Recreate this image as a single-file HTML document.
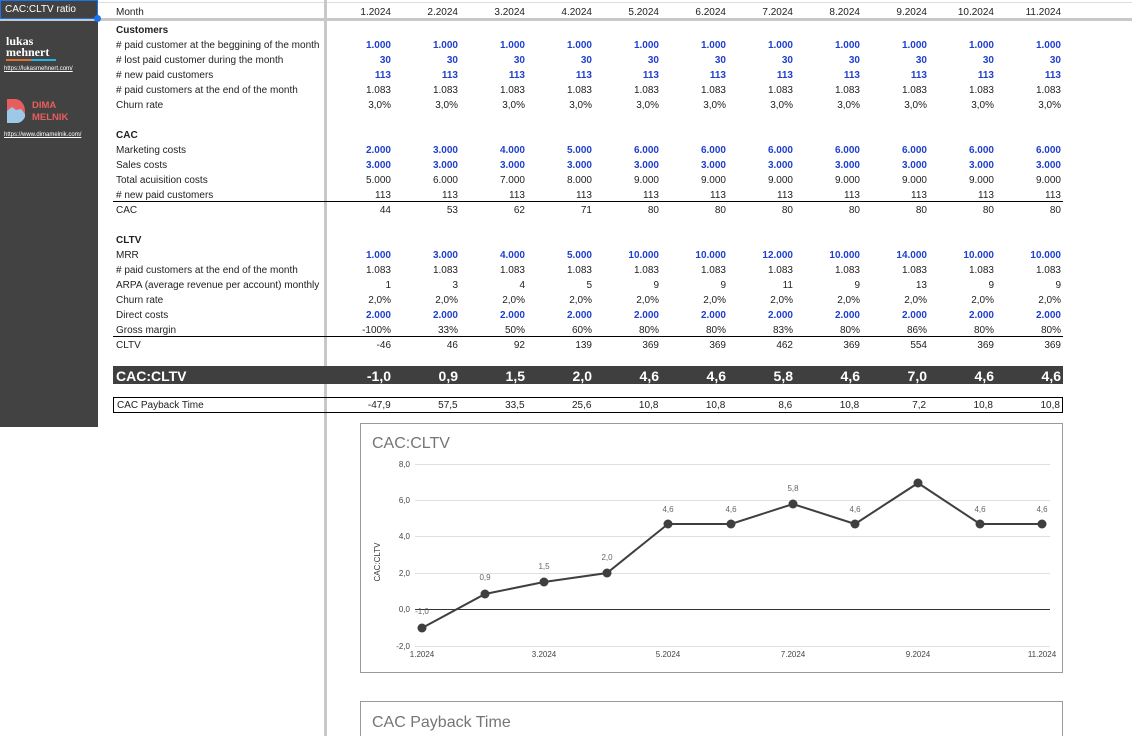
<!DOCTYPE html>
<html><head><meta charset="utf-8"><style>
*{margin:0;padding:0;box-sizing:border-box}
body{width:1132px;height:736px;background:#fff;position:relative;overflow:hidden;font-family:"Liberation Sans",Arial,sans-serif;font-size:10px;color:#222}
.r{position:absolute;left:113px;width:950px;height:15px;display:flex;line-height:15px}
.r>div{position:relative;top:1px}
.r .l{width:213px;padding-left:3px;white-space:nowrap}
.r .v{width:67px;text-align:right;padding-right:2px}
.b{font-weight:bold}
.blue .v{color:#1f3fcf;font-weight:bold}
.ul{border-bottom:1px solid #000}
</style></head><body>
<div style="position:absolute;left:0;top:0;width:1132px;height:3px;border-bottom:1px solid #ddd"></div>
<div style="position:absolute;left:0;top:18px;width:1132px;height:3px;background:#c8c8c8"></div>
<div style="position:absolute;left:324px;top:0;width:3px;height:736px;background:#c8c8c8"></div>
<div style="position:absolute;left:0;top:21px;width:98px;height:406px;background:#424242"></div>
<div style="position:absolute;left:0;top:0;width:98px;height:19px;background:#424242;border:1px solid #1a73e8;color:#fff;font-size:10px;line-height:17px;padding-left:4px">CAC:CLTV ratio</div>
<div style="position:absolute;left:94px;top:15px;width:7px;height:7px;border-radius:50%;background:#1a73e8"></div>
<div style="position:absolute;left:6px;top:36px;color:#fff;font-family:'Liberation Serif',serif;font-weight:bold;font-size:12px;line-height:11px">lukas<br>mehnert</div>
<div style="position:absolute;left:6px;top:59px;width:25px;height:2px;background:#e07030"></div>
<div style="position:absolute;left:31px;top:59px;width:25px;height:2px;background:#27b4e0"></div>
<div style="position:absolute;left:4px;top:66px;color:#fff;font-size:6px;text-decoration:underline">https://lukasmehnert.com/</div>
<svg style="position:absolute;left:7px;top:99px" width="20" height="24" viewBox="0 0 20 24"><path d="M0 0H8a10 12 0 0 1 0 24H0Z" fill="#e85d5d"/><path d="M0 12l5-4 4 3 5-1 4 5v3a10 12 0 0 1-10 6H0Z" fill="#9ec8e8"/></svg>
<div style="position:absolute;left:32px;top:100px;color:#e85d5d;font-weight:bold;font-size:9.5px;line-height:12px">DIMA<br>MELNIK</div>
<div style="position:absolute;left:4px;top:132px;color:#fff;font-size:6px;text-decoration:underline">https://www.dimamelnik.com/</div>

<div class="r" style="top:4px"><div class="l">Month</div><div class="v">1.2024</div><div class="v">2.2024</div><div class="v">3.2024</div><div class="v">4.2024</div><div class="v">5.2024</div><div class="v">6.2024</div><div class="v">7.2024</div><div class="v">8.2024</div><div class="v">9.2024</div><div class="v">10.2024</div><div class="v">11.2024</div></div>
<div class="r b" style="top:22px"><div class="l">Customers</div></div>
<div class="r blue" style="top:37px"><div class="l"># paid customer at the beggining of the month</div><div class="v">1.000</div><div class="v">1.000</div><div class="v">1.000</div><div class="v">1.000</div><div class="v">1.000</div><div class="v">1.000</div><div class="v">1.000</div><div class="v">1.000</div><div class="v">1.000</div><div class="v">1.000</div><div class="v">1.000</div></div>
<div class="r blue" style="top:52px"><div class="l"># lost paid customer during the month</div><div class="v">30</div><div class="v">30</div><div class="v">30</div><div class="v">30</div><div class="v">30</div><div class="v">30</div><div class="v">30</div><div class="v">30</div><div class="v">30</div><div class="v">30</div><div class="v">30</div></div>
<div class="r blue" style="top:67px"><div class="l"># new paid customers</div><div class="v">113</div><div class="v">113</div><div class="v">113</div><div class="v">113</div><div class="v">113</div><div class="v">113</div><div class="v">113</div><div class="v">113</div><div class="v">113</div><div class="v">113</div><div class="v">113</div></div>
<div class="r" style="top:82px"><div class="l"># paid customers at the end of the month</div><div class="v">1.083</div><div class="v">1.083</div><div class="v">1.083</div><div class="v">1.083</div><div class="v">1.083</div><div class="v">1.083</div><div class="v">1.083</div><div class="v">1.083</div><div class="v">1.083</div><div class="v">1.083</div><div class="v">1.083</div></div>
<div class="r" style="top:97px"><div class="l">Churn rate</div><div class="v">3,0%</div><div class="v">3,0%</div><div class="v">3,0%</div><div class="v">3,0%</div><div class="v">3,0%</div><div class="v">3,0%</div><div class="v">3,0%</div><div class="v">3,0%</div><div class="v">3,0%</div><div class="v">3,0%</div><div class="v">3,0%</div></div>
<div class="r b" style="top:127px"><div class="l">CAC</div></div>
<div class="r blue" style="top:142px"><div class="l">Marketing costs</div><div class="v">2.000</div><div class="v">3.000</div><div class="v">4.000</div><div class="v">5.000</div><div class="v">6.000</div><div class="v">6.000</div><div class="v">6.000</div><div class="v">6.000</div><div class="v">6.000</div><div class="v">6.000</div><div class="v">6.000</div></div>
<div class="r blue" style="top:157px"><div class="l">Sales costs</div><div class="v">3.000</div><div class="v">3.000</div><div class="v">3.000</div><div class="v">3.000</div><div class="v">3.000</div><div class="v">3.000</div><div class="v">3.000</div><div class="v">3.000</div><div class="v">3.000</div><div class="v">3.000</div><div class="v">3.000</div></div>
<div class="r" style="top:172px"><div class="l">Total acuisition costs</div><div class="v">5.000</div><div class="v">6.000</div><div class="v">7.000</div><div class="v">8.000</div><div class="v">9.000</div><div class="v">9.000</div><div class="v">9.000</div><div class="v">9.000</div><div class="v">9.000</div><div class="v">9.000</div><div class="v">9.000</div></div>
<div class="r ul" style="top:187px"><div class="l"># new paid customers</div><div class="v">113</div><div class="v">113</div><div class="v">113</div><div class="v">113</div><div class="v">113</div><div class="v">113</div><div class="v">113</div><div class="v">113</div><div class="v">113</div><div class="v">113</div><div class="v">113</div></div>
<div class="r" style="top:202px"><div class="l">CAC</div><div class="v">44</div><div class="v">53</div><div class="v">62</div><div class="v">71</div><div class="v">80</div><div class="v">80</div><div class="v">80</div><div class="v">80</div><div class="v">80</div><div class="v">80</div><div class="v">80</div></div>
<div class="r b" style="top:232px"><div class="l">CLTV</div></div>
<div class="r blue" style="top:247px"><div class="l" style="color:#222;font-weight:normal">MRR</div><div class="v">1.000</div><div class="v">3.000</div><div class="v">4.000</div><div class="v">5.000</div><div class="v">10.000</div><div class="v">10.000</div><div class="v">12.000</div><div class="v">10.000</div><div class="v">14.000</div><div class="v">10.000</div><div class="v">10.000</div></div>
<div class="r" style="top:262px"><div class="l"># paid customers at the end of the month</div><div class="v">1.083</div><div class="v">1.083</div><div class="v">1.083</div><div class="v">1.083</div><div class="v">1.083</div><div class="v">1.083</div><div class="v">1.083</div><div class="v">1.083</div><div class="v">1.083</div><div class="v">1.083</div><div class="v">1.083</div></div>
<div class="r" style="top:277px"><div class="l">ARPA (average revenue per account) monthly</div><div class="v">1</div><div class="v">3</div><div class="v">4</div><div class="v">5</div><div class="v">9</div><div class="v">9</div><div class="v">11</div><div class="v">9</div><div class="v">13</div><div class="v">9</div><div class="v">9</div></div>
<div class="r" style="top:292px"><div class="l">Churn rate</div><div class="v">2,0%</div><div class="v">2,0%</div><div class="v">2,0%</div><div class="v">2,0%</div><div class="v">2,0%</div><div class="v">2,0%</div><div class="v">2,0%</div><div class="v">2,0%</div><div class="v">2,0%</div><div class="v">2,0%</div><div class="v">2,0%</div></div>
<div class="r blue" style="top:307px"><div class="l" style="color:#222;font-weight:normal">Direct costs</div><div class="v">2.000</div><div class="v">2.000</div><div class="v">2.000</div><div class="v">2.000</div><div class="v">2.000</div><div class="v">2.000</div><div class="v">2.000</div><div class="v">2.000</div><div class="v">2.000</div><div class="v">2.000</div><div class="v">2.000</div></div>
<div class="r ul" style="top:322px"><div class="l">Gross margin</div><div class="v">-100%</div><div class="v">33%</div><div class="v">50%</div><div class="v">60%</div><div class="v">80%</div><div class="v">80%</div><div class="v">83%</div><div class="v">80%</div><div class="v">86%</div><div class="v">80%</div><div class="v">80%</div></div>
<div class="r" style="top:337px"><div class="l">CLTV</div><div class="v">-46</div><div class="v">46</div><div class="v">92</div><div class="v">139</div><div class="v">369</div><div class="v">369</div><div class="v">462</div><div class="v">369</div><div class="v">554</div><div class="v">369</div><div class="v">369</div></div>
<div class="r" style="top:366px;height:18px;line-height:18px;background:#3f3f3f;color:#fff;font-weight:bold;font-size:14px"><div class="l">CAC:CLTV</div><div class="v">-1,0</div><div class="v">0,9</div><div class="v">1,5</div><div class="v">2,0</div><div class="v">4,6</div><div class="v">4,6</div><div class="v">5,8</div><div class="v">4,6</div><div class="v">7,0</div><div class="v">4,6</div><div class="v">4,6</div></div>
<div class="r" style="top:397px;height:16px;line-height:14px;border:1px solid #000"><div class="l" style="width:212px">CAC Payback Time</div><div class="v">-47,9</div><div class="v">57,5</div><div class="v">33,5</div><div class="v">25,6</div><div class="v">10,8</div><div class="v">10,8</div><div class="v">8,6</div><div class="v">10,8</div><div class="v">7,2</div><div class="v">10,8</div><div class="v">10,8</div></div>
<div style="position:absolute;left:326px;top:398px;width:1px;height:14px;background:#c8c8c8"></div>

<svg style="position:absolute;left:0;top:0" width="1132" height="736" font-family="Liberation Sans, Arial, sans-serif">
<rect x="360.5" y="423.5" width="702" height="249" fill="#fff" stroke="#9a9a9a"/>
<rect x="360.5" y="701.5" width="702" height="60" fill="#fff" stroke="#9a9a9a"/>
<text x="372" y="448" font-size="16" fill="#757575">CAC:CLTV</text>
<text x="372" y="727" font-size="16" fill="#757575">CAC Payback Time</text>
<g stroke="#e0e0e0" stroke-width="1">
<line x1="415" x2="1050" y1="464.5" y2="464.5"/><line x1="415" x2="1050" y1="500.5" y2="500.5"/><line x1="415" x2="1050" y1="536.5" y2="536.5"/><line x1="415" x2="1050" y1="573.5" y2="573.5"/><line x1="415" x2="1050" y1="646.5" y2="646.5"/>
</g>
<line x1="415" x2="1050" y1="609.5" y2="609.5" stroke="#333"/>
<g font-size="8" fill="#444" text-anchor="end">
<text x="410" y="467">8,0</text><text x="410" y="503">6,0</text><text x="410" y="539">4,0</text><text x="410" y="576">2,0</text><text x="410" y="612">0,0</text><text x="410" y="649">-2,0</text>
</g>
<text transform="translate(380,562) rotate(-90)" font-size="8" fill="#333" text-anchor="middle">CAC:CLTV</text>
<g font-size="8" fill="#444" text-anchor="middle">
<text x="422" y="657">1.2024</text><text x="544" y="657">3.2024</text><text x="668" y="657">5.2024</text><text x="793" y="657">7.2024</text><text x="918" y="657">9.2024</text><text x="1042" y="657">11.2024</text>
</g>
<polyline fill="none" stroke="#3f3f3f" stroke-width="2" points="422,628 485,594 544,582 607,573 668,524 731,524 793,504 855,524 918,483 980,524 1042,524"/>
<g fill="#3f3f3f">
<circle cx="422" cy="628" r="4.5"/><circle cx="485" cy="594" r="4.5"/><circle cx="544" cy="582" r="4.5"/><circle cx="607" cy="573" r="4.5"/><circle cx="668" cy="524" r="4.5"/><circle cx="731" cy="524" r="4.5"/><circle cx="793" cy="504" r="4.5"/><circle cx="855" cy="524" r="4.5"/><circle cx="918" cy="483" r="4.5"/><circle cx="980" cy="524" r="4.5"/><circle cx="1042" cy="524" r="4.5"/>
</g>
<g font-size="8" fill="#666" text-anchor="middle">
<text x="422" y="614">-1,0</text><text x="485" y="580">0,9</text><text x="544" y="569">1,5</text><text x="607" y="560">2,0</text><text x="668" y="512">4,6</text><text x="731" y="512">4,6</text><text x="793" y="491">5,8</text><text x="855" y="512">4,6</text><text x="980" y="512">4,6</text><text x="1042" y="512">4,6</text>
</g>
</svg>
</body></html>
